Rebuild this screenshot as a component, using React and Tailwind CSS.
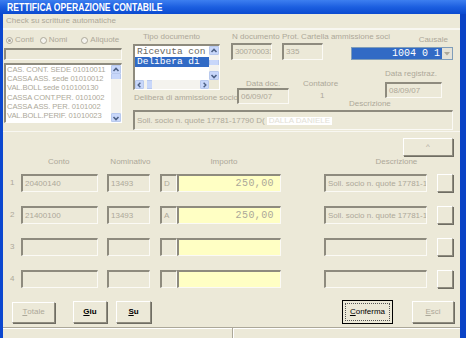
import React from 'react';

function Label({ className = '', children }) {
  return (
    <div className={`text-[8px] leading-[8px] text-[#aca899] whitespace-nowrap ${className}`}>
      {children}
    </div>
  );
}

// sunken edit box, disabled look
function Field({ className = '', children }) {
  return (
    <div
      className={`flex items-center overflow-hidden whitespace-nowrap border-t-2 border-l-2 border-r border-b border-t-[#8e8b7e] border-l-[#8e8b7e] border-r-[#fbfaf5] border-b-[#fbfaf5] pl-[2px] text-[8px] leading-none text-[#aca899] ${className}`}
    >
      {children}
    </div>
  );
}

function Btn({ className = '', children }) {
  return (
    <div
      className={`flex items-center justify-center border border-t-white border-l-white border-r-[#8e8b7e] border-b-[#8e8b7e] bg-[#ece9d8] text-[8px] leading-none shadow-[1px_1px_0_#6f6d63] ${className}`}
    >
      {children}
    </div>
  );
}

function Arrow({ dir }) {
  const d = {
    up: 'M1.5 5 L4 2.5 L6.5 5',
    down: 'M1.5 3 L4 5.5 L6.5 3',
    left: 'M5 1.5 L2.5 4 L5 6.5',
    right: 'M3 1.5 L5.5 4 L3 6.5',
  }[dir];
  return (
    <svg width="8" height="8" viewBox="0 0 8 8">
      <path d={d} fill="none" stroke="#4d6185" strokeWidth="1.6" />
    </svg>
  );
}

function ScrollBtn({ dir, className = '' }) {
  return (
    <div className={`flex items-center justify-center rounded-[1px] border border-[#b8c9ee] bg-[#c8d7fa] ${className}`}>
      <Arrow dir={dir} />
    </div>
  );
}

const conti = [
  'CAS. CONT. SEDE 01010011',
  'CASSA ASS. sede  01010012',
  'VAL.BOLL sede  010100130',
  'CASSA CONT.PER. 0101002',
  'CASSA ASS. PER. 0101002',
  'VAL.BOLL.PERIF. 01010023',
];

const rows = [
  { n: '1', conto: '20400140', nom: '13493', da: 'D', imp: '250,00', desc: 'Soll. socio n. quote 17781-1' },
  { n: '2', conto: '21400100', nom: '13493', da: 'A', imp: '250,00', desc: 'Soll. socio n. quote 17781-1' },
  { n: '3', conto: '', nom: '', da: '', imp: '', desc: '' },
  { n: '4', conto: '', nom: '', da: '', imp: '', desc: '' },
];

function GridRow({ r }) {
  return (
    <div className="flex h-[18px] items-center">
      <div className="w-[18px] pl-[7px] text-[8px] leading-none text-[#aca899]">{r.n}</div>
      <Field className="h-full w-[77px]">{r.conto}</Field>
      <Field className="ml-[9px] h-full w-[43px]">{r.nom}</Field>
      <Field className="ml-[10px] h-full w-[17px]">{r.da}</Field>
      <Field className="h-full w-[104px] justify-end bg-[#ffffc4] pr-[6px] font-['Liberation_Mono',monospace] text-[10px] tracking-[0.4px] text-[#9a978b]">
        {r.imp}
      </Field>
      <Field className="ml-[43px] h-full w-[103px]">{r.desc}</Field>
      <Btn className="ml-[10px] h-full w-[16px]" />
    </div>
  );
}

export default function App() {
  return (
    <div className="h-[345px] w-[466px] overflow-hidden bg-white font-['Liberation_Sans',Arial,sans-serif]">
      <div className="flex h-[338px] flex-col">
        {/* title bar */}
        <div className="flex h-[14px] items-center bg-gradient-to-b from-[#3d7ff0] via-[#1c5fe0] to-[#0b4ad0] pl-[7px]">
          <span className="origin-left scale-x-[0.78] whitespace-nowrap text-[11px] font-bold leading-none text-white">
            RETTIFICA OPERAZIONE CONTABILE
          </span>
        </div>

        <div className="flex flex-1">
          <div className="w-[3px] bg-[#0b47cf]" />
          <div className="flex w-[457px] flex-col bg-[#ece9d8]">
            {/* check row */}
            <div className="flex h-[16px] items-center border-b-2 border-b-[#f8f7f1] pl-[3px]">
              <Label>Check su scritture automatiche</Label>
            </div>

            {/* header area */}
            <div className="flex">
              {/* left column */}
              <div className="ml-[1px] flex w-[118px] flex-col">
                <div className="mt-[5px] flex h-[10px] items-center text-[8px] leading-none text-[#aca899]">
                  <div className="ml-[2px] flex h-[7px] w-[7px] items-center justify-center rounded-full border border-[#aca899] bg-[#f4f3ee]">
                    <div className="h-[3px] w-[3px] rounded-full bg-[#aca899]" />
                  </div>
                  <span className="ml-[2px]">Conti</span>
                  <div className="ml-[6px] h-[7px] w-[7px] rounded-full border border-[#aca899] bg-[#f4f3ee]" />
                  <span className="ml-[2px]">Nomi</span>
                  <div className="ml-[14px] h-[7px] w-[7px] rounded-full border border-[#aca899] bg-[#f4f3ee]" />
                  <span className="ml-[2px]">Aliquote</span>
                </div>
                <Field className="mt-[3px] h-[12px] w-full" />
                <div className="mt-[3px] flex h-[60px] border-t-2 border-l-2 border-r border-b border-t-[#8e8b7e] border-l-[#8e8b7e] border-r-white border-b-white bg-white">
                  <div className="flex-1 overflow-hidden pl-[1px] text-[7.6px] leading-[9.2px] tracking-[-0.1px] text-[#aca899]">
                    {conti.map((c) => (
                      <div key={c} className="whitespace-nowrap">{c}</div>
                    ))}
                  </div>
                  <div className="flex w-[10px] flex-col bg-[#f4f3ee]">
                    <ScrollBtn dir="up" className="h-[9px]" />
                    <div className="h-[5px] border-x border-[#b8c9ee] bg-[#c8d7fa]" />
                    <div className="flex-1" />
                    <ScrollBtn dir="down" className="h-[9px]" />
                  </div>
                </div>
              </div>

              {/* right area */}
              <div className="ml-[11px] flex w-[320px] flex-col">
                <div className="flex">
                  {/* tipo documento */}
                  <div className="flex w-[87px] flex-col">
                    <Label className="mt-[3px] pl-[10px]">Tipo documento</Label>
                    <div className="mt-[3px] flex h-[46px] flex-col border-t-2 border-l-2 border-r border-b border-t-[#8e8b7e] border-l-[#8e8b7e] border-r-white border-b-white bg-white">
                      <div className="flex flex-1">
                        <div className="flex-1 pt-[1px] font-['Liberation_Mono',monospace] text-[9.5px] leading-[10px] text-[#6b6a63]">
                          <div className="pl-[2px]">Ricevuta con</div>
                          <div className="bg-[#316ac5] pl-[2px] text-white">Delibera di</div>
                        </div>
                        <div className="flex w-[10px] flex-col bg-[#f4f3ee]">
                          <ScrollBtn dir="up" className="h-[9px]" />
                          <div className="mt-[5px] h-[5px] border-x border-[#b8c9ee] bg-[#c8d7fa]" />
                          <div className="flex-1" />
                          <ScrollBtn dir="down" className="h-[9px]" />
                        </div>
                      </div>
                      <div className="flex h-[9px]">
                        <div className="flex flex-1 bg-[#f4f3ee]">
                          <ScrollBtn dir="left" className="w-[9px]" />
                          <div className="ml-[3px] w-[5px] border-y border-[#b8c9ee] bg-[#c8d7fa]" />
                          <div className="flex-1" />
                          <ScrollBtn dir="right" className="w-[9px]" />
                        </div>
                        <div className="w-[10px] bg-[#ece9d8]" />
                      </div>
                    </div>
                    <Label className="mt-[4px] pl-[1px]">Delibera di ammissione socio</Label>
                  </div>

                  {/* right fields */}
                  <div className="flex w-[233px] flex-col">
                    <div className="flex h-[32px]">
                      <div className="ml-[11px] flex w-[41px] flex-col">
                        <Label className="mt-[3px] pl-[1px]">N documento</Label>
                        <Field className="mt-[2px] h-[17px] pl-[1px] text-[7.2px] tracking-[-0.2px]">300700031</Field>
                      </div>
                      <div className="ml-[10px] flex w-[41px] flex-col">
                        <Label className="mt-[3px]">Prot. Cartella ammissione soci</Label>
                        <Field className="mt-[2px] h-[17px]">335</Field>
                      </div>
                      <div className="ml-[28px] flex w-[102px] flex-col">
                        <Label className="mt-[6px] pr-[5px] text-right">Causale</Label>
                        <div className="mt-[3px] flex h-[13px] border border-[#7f9db9] bg-[#316ac5]">
                          <div className="flex flex-1 items-center justify-end pr-[2px] font-['Liberation_Mono',monospace] text-[10px] leading-none text-white">
                            1004 0 1
                          </div>
                          <div className="flex w-[10px] items-center justify-center bg-[#e4e2d8]">
                            <svg width="6" height="4" viewBox="0 0 6 4">
                              <path d="M0 0 L6 0 L3 3.5 Z" fill="#aca899" />
                            </svg>
                          </div>
                        </div>
                      </div>
                    </div>
                    <div className="flex">
                      <div className="ml-[17px] flex w-[52px] flex-col">
                        <Label className="mt-[18px] pl-[9px]">Data doc.</Label>
                        <Field className="h-[16px]">06/09/07</Field>
                      </div>
                      <div className="ml-[14px] flex w-[30px] flex-col">
                        <Label className="mt-[18px]">Contatore</Label>
                        <Label className="mt-[4px] pl-[17px]">1</Label>
                      </div>
                      <div className="ml-[16px] flex w-[104px] flex-col">
                        <Label className="mt-[8px] ml-[36px]">Data registraz.</Label>
                        <Field className="ml-[36px] mt-[4px] h-[16px] w-[57px]">08/09/07</Field>
                        <Label className="mt-[2px]">Descrizione</Label>
                      </div>
                    </div>
                  </div>
                </div>

                <Field className="mt-[2px] h-[20px] w-[320px]">
                  Soll. socio n. quote 17781-17790 D(
                  <span className="ml-[2px] bg-white px-[2px] text-[#e2e0d6]">DALLA DANIELE</span>
                </Field>
              </div>
            </div>

            {/* grid area */}
            <div className="mt-[1px] h-px w-full bg-[#f8f7f1]" />
            <div className="mt-[6px] flex">
              <Btn className="ml-[400px] h-[18px] w-[50px] text-[#aca899]">^</Btn>
            </div>
            <div className="mt-[2px] flex h-[8px] text-[8px] leading-[8px] text-[#aca899]">
              <div className="ml-[45px]">Conto</div>
              <div className="ml-[41px]">Nominativo</div>
              <div className="ml-[60px]">Importo</div>
              <div className="ml-[138px]">Descrizione</div>
            </div>
            <div className="mt-[8px] flex flex-col gap-[14px]">
              {rows.map((r) => (
                <GridRow key={r.n} r={r} />
              ))}
            </div>

            {/* buttons */}
            <div className="mt-[12px] flex h-[24px] items-center text-[8px]">
              <Btn className="ml-[9px] h-[21px] w-[43px] text-[#aca899]">
                <span className="underline">T</span>otale
              </Btn>
              <Btn className="ml-[18px] h-[22px] w-[34px] font-bold text-black">
                <span className="underline">G</span>iu
              </Btn>
              <Btn className="ml-[9px] h-[22px] w-[35px] font-bold text-black">
                <span className="underline">S</span>u
              </Btn>
              <div className="ml-[191px] flex h-[24px] w-[51px] items-center justify-center border border-black bg-[#ece9d8] p-[2px]">
                <div className="flex h-full w-full items-center justify-center border border-dotted border-[#555]">
                  <span className="text-black"><span className="underline">C</span>onferma</span>
                </div>
              </div>
              <Btn className="ml-[19px] h-[22px] w-[42px] text-[#aca899]">
                <span className="underline">E</span>sci
              </Btn>
            </div>

            {/* status bar */}
            <div className="mt-[3px] flex flex-1 border-t border-t-[#aca899] shadow-[inset_0_1px_0_#fff]">
              <div className="w-[230px] border-r border-r-[#aca899]" />
              <div className="flex-1 border-l border-l-white" />
            </div>
          </div>
          <div className="w-[6px] bg-[#0a43c6]" />
        </div>
      </div>
    </div>
  );
}
